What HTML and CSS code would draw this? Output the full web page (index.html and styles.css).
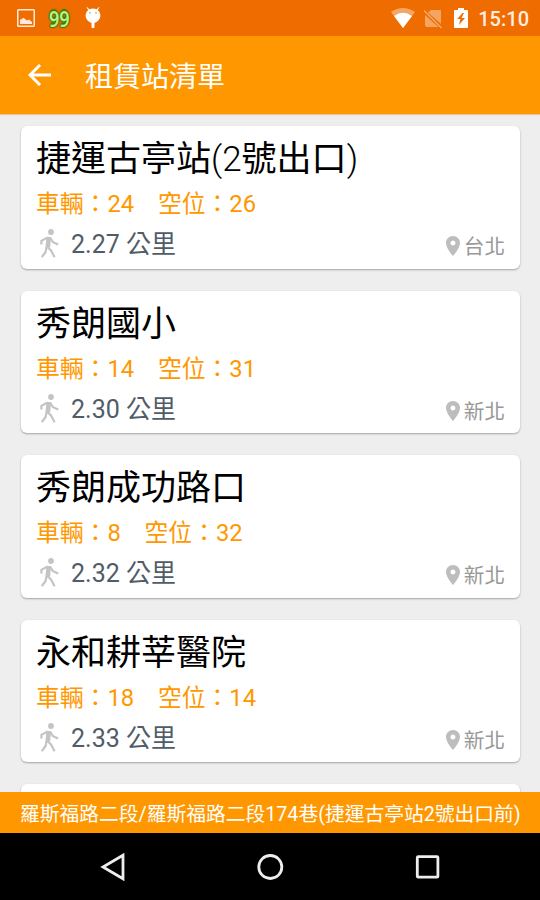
FILE: index.html
```html
<!DOCTYPE html>
<html lang="zh-Hant">
<head>
<meta charset="utf-8">
<title>租賃站清單</title>
<link rel="stylesheet" href="styles.css">
</head>
<body>
<svg width="0" height="0" class="defs">
  <symbol id="walk" viewBox="0 0 24 30">
    <circle cx="15" cy="3" r="2.9"/>
    <path d="M10.5 8L15 8.2L14.2 18.5L9.5 17.5Z"/>
    <path d="M5.4 15.4V11.8L11 8.8L14.4 9.2L17 13.2L22.2 15.6M10.9 17.5L15 21.5L18.6 28.2M10.6 17.5L9.6 23L5.8 28.2" fill="none" stroke="currentColor" stroke-width="2.2"/>
  </symbol>
  <symbol id="pin" viewBox="5 2 14 20">
    <path d="M12 2C8.13 2 5 5.13 5 9c0 5.25 7 13 7 13s7-7.75 7-13c0-3.87-3.13-7-7-7zm0 9.5a2.5 2.5 0 1 1 0-5 2.5 2.5 0 0 1 0 5z"/>
  </symbol>
</svg>
<div class="screen">
  <header class="status">
    <svg class="photo" viewBox="0 0 18 18"><path fill-rule="evenodd" d="M1 0H17L18 1V17L17 18H1L0 17V1ZM1.5 1.5V16.5H16.5V1.5Z"/><path d="M3 15V11L6.5 8.7L10 11.5L12 10.5L15 13V15Z"/></svg>
    <span class="level">99</span>
    <svg class="droid" viewBox="0 0 16 22"><path d="M2 0L4.3 2.2Q8 1 11.7 2.2L14 0L14.4 .5L12.8 3Q15.5 5 15.5 8.5Q15 14 9.5 16V20.5Q8 22 6.5 20.5V16Q1 14 .5 8.5Q.5 5 3.2 3L1.6 .5Z"/><path class="eyes" d="M4.3 5.2H5.6V6.5H4.3ZM10.4 5.2H11.7V6.5H10.4Z"/></svg>
    <div class="system">
      <svg class="wifi" viewBox="0 0 24 20"><path opacity=".4" d="M0 4Q12 -4 24 4L12 20Z"/><path d="M3 8Q12 1.5 21 8L12 20Z"/></svg>
      <svg class="sim" viewBox="0 0 20 20"><path opacity=".38" d="M8 1H17Q18 1 18 2V15L5 3.5ZM2 6L15.5 18H4Q2 18 2 16Z"/><path d="M1 1.5L18.5 19" stroke="#fff" stroke-width="1.5" opacity=".42"/></svg>
      <svg class="battery" viewBox="0 0 14 20"><path d="M4 0H10V2H13Q14 2 14 3V19Q14 20 13 20H1Q0 20 0 19V3Q0 2 1 2H4Z"/><path class="bolt" d="M8.5 5L3.2 11H6.4L5 17L11 10H7.5L10 5Z"/></svg>
      <span class="clock">15:10</span>
    </div>
  </header>
  <div class="appbar">
    <svg class="back" viewBox="0 0 24 22"><path d="M12 1L2 11L12 21M2 11H23" fill="none" stroke="#fff" stroke-width="2.9"/></svg>
    <h1>租賃站清單</h1>
  </div>
  <main class="list">
    <article class="card">
      <h2>捷運古亭站<span class="light">(2</span>號出口<span class="light">)</span></h2>
      <p class="counts">車輛：24　空位：26</p>
      <div class="meta"><svg class="walk"><use href="#walk"/></svg><span class="distance">2.27 公里</span><svg class="pin"><use href="#pin"/></svg><span class="city">台北</span></div>
    </article>
    <article class="card">
      <h2>秀朗國小</h2>
      <p class="counts">車輛：14　空位：31</p>
      <div class="meta"><svg class="walk"><use href="#walk"/></svg><span class="distance">2.30 公里</span><svg class="pin"><use href="#pin"/></svg><span class="city">新北</span></div>
    </article>
    <article class="card">
      <h2>秀朗成功路口</h2>
      <p class="counts">車輛：8　空位：32</p>
      <div class="meta"><svg class="walk"><use href="#walk"/></svg><span class="distance">2.32 公里</span><svg class="pin"><use href="#pin"/></svg><span class="city">新北</span></div>
    </article>
    <article class="card">
      <h2>永和耕莘醫院</h2>
      <p class="counts">車輛：18　空位：14</p>
      <div class="meta"><svg class="walk"><use href="#walk"/></svg><span class="distance">2.33 公里</span><svg class="pin"><use href="#pin"/></svg><span class="city">新北</span></div>
    </article>
    <article class="card"></article>
  </main>
  <div class="address">羅斯福路二段/羅斯福路二段174巷(捷運古亭站2號出口前)</div>
  <nav class="nav">
    <svg viewBox="0 0 28 28"><path d="M25 2.2V25.8L5 14Z"/></svg>
    <svg viewBox="0 0 28 28"><circle cx="14.3" cy="14" r="11.5"/></svg>
    <svg viewBox="0 0 28 28"><rect x="3.3" y="3.6" width="20.6" height="20.6" rx="1"/></svg>
  </nav>
</div>
</body>
</html>
```
FILE: styles.css
```css
* { box-sizing: border-box; }
body {
  margin: 0;
  font-family: Roboto, "Noto Sans CJK TC", sans-serif;
}
.defs { display: block; position: absolute; }
svg { display: block; flex: none; }
h1, h2, p { margin: 0; font-weight: 400; white-space: nowrap; }
.screen {
  width: 540px;
  height: 900px;
  display: flex;
  flex-direction: column;
  overflow: hidden;
  background: #eee;
}
.status {
  flex: none;
  height: 36px;
  padding: 0 11px 0 17px;
  display: flex;
  align-items: center;
  background: #ef6c00;
  fill: #fff;
}
.photo { width: 18px; height: 18px; opacity: .85; }
.level {
  width: 22px;
  margin-left: 14px;
  font: 600 18px/36px "Noto Sans", sans-serif;
  transform: scaleY(1.22);
  color: #b9f28a;
  text-shadow: 1px 0 1px #3c7a00, -1px 0 1px #3c7a00, 0 1px 1px #3c7a00, 0 -1px 1px #3c7a00;
}
.droid { width: 16px; height: 22px; margin-left: 14px; }
.eyes, .bolt { fill: #ef6c00; }
.system { margin-left: auto; display: flex; align-items: center; }
.wifi { width: 24px; height: 20px; }
.sim { width: 20px; height: 20px; margin: 1px 0 0 8px; }
.battery { width: 14px; height: 20px; margin-left: 11px; }
.clock { margin: 2px 0 0 10px; font-size: 20px; font-weight: 500; line-height: 36px; color: #ffeee2; }
.appbar {
  flex: none;
  height: 78px;
  padding-left: 28px;
  display: flex;
  align-items: center;
  background: #ff9800;
  box-shadow: 0 1px 1px #e5c79d;
}
.back { width: 24px; height: 22px; }
.appbar h1 { margin: 5px 0 0 33px; font-size: 28px; line-height: 42px; color: #fff; }
.list {
  flex: 1;
  min-height: 0;
  overflow: hidden;
  padding: 12px 20px 0 21px;
  display: flex;
  flex-direction: column;
  gap: 22px;
}
.card {
  flex: none;
  height: 142.6px;
  padding: 9px 15px 0;
  border-radius: 6px;
  background: #fff;
  box-shadow: 0 1px 2px rgba(0, 0, 0, .32);
}
.card h2 { font-size: 35px; line-height: 50px; color: #000; }
.light { font-weight: 300; }
.counts { margin-top: -1px; font-size: 23.8px; line-height: 40px; color: #ff9800; }
.meta { display: flex; align-items: center; height: 42px; }
.walk { width: 24px; height: 30px; margin: -2px 11px 0 0; fill: #c4c4c4; color: #c4c4c4; }
.distance { flex: 1; font-size: 25px; line-height: 40px; color: #505c68; }
.pin { width: 14px; height: 20px; margin: 2px 4px 0 0; fill: #bdbdbd; }
.city { margin-top: 4px; font-size: 20.6px; line-height: 32px; color: #999; }
.address {
  flex: none;
  height: 41px;
  padding: 2px 0 0 20px;
  font-size: 19.75px;
  line-height: 41px;
  white-space: nowrap;
  color: #fff;
  background: #ff9800;
}
.nav {
  flex: none;
  height: 67px;
  padding: 0 98px;
  display: flex;
  justify-content: space-between;
  align-items: center;
  background: #000;
}
.nav svg { width: 28px; height: 28px; fill: none; stroke: #eee; stroke-width: 2.8; }
```
